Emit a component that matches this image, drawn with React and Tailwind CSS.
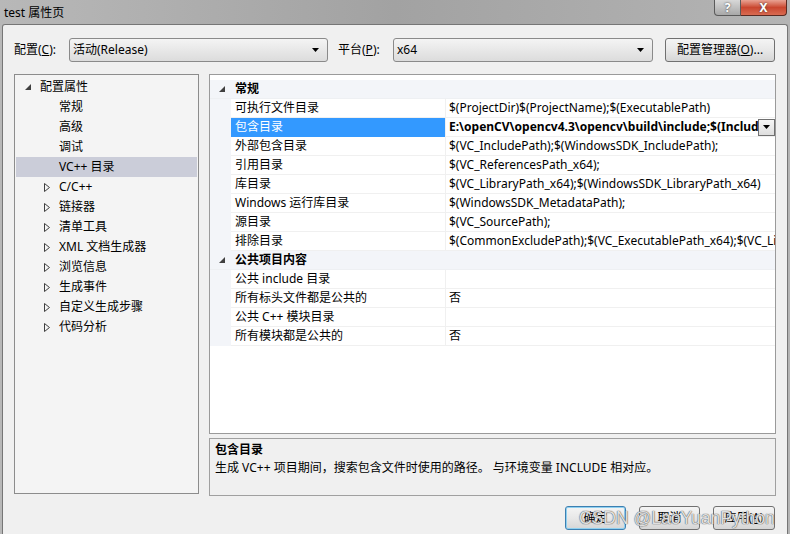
import React from "react";

const font = { fontFamily: '"Noto Sans", "Noto Sans CJK SC", sans-serif' };

const Expanded = ({ className = "" }) => (
  <svg width="6" height="6" viewBox="0 0 6 6" className={className}>
    <path d="M6 0 L6 6 L0 6 Z" fill="#404040" />
  </svg>
);

const Collapsed = () => (
  <svg width="6" height="9" viewBox="0 0 6 9">
    <path d="M0.5 0.5 L5.5 4.5 L0.5 8.5 Z" fill="none" stroke="#404040" strokeWidth="1" />
  </svg>
);

const Arrow = () => (
  <svg width="7" height="4" viewBox="0 0 7 4">
    <path d="M0 0 L7 0 L3.5 4 Z" fill="#000" />
  </svg>
);

const Combo = ({ width, text }) => (
  <div
    className={`${width} h-[24px] flex items-center justify-between pl-[3px] pr-[8px] border border-[#8a8a8a] rounded-[3px] bg-gradient-to-b from-[#f4f4f4] to-[#dcdcdc] text-[12px] text-black`}
  >
    <span>{text}</span>
    <Arrow />
  </div>
);

const Button = ({ className = "", children, focused }) => (
  <div
    className={`h-[24px] flex items-center justify-center rounded-[3px] border text-[12px] text-black bg-gradient-to-b from-[#f4f4f4] via-[#e8e8e8] to-[#d6d6d6] ${
      focused ? "border-[#3c7fb1] shadow-[inset_0_0_0_1px_#8fd0f0]" : "border-[#707070]"
    } ${className}`}
  >
    {children}
  </div>
);

const treeItems = [
  { label: "配置属性", level: 0, icon: "open" },
  { label: "常规", level: 1 },
  { label: "高级", level: 1 },
  { label: "调试", level: 1 },
  { label: "VC++ 目录", level: 1, selected: true },
  { label: "C/C++", level: 1, icon: "closed" },
  { label: "链接器", level: 1, icon: "closed" },
  { label: "清单工具", level: 1, icon: "closed" },
  { label: "XML 文档生成器", level: 1, icon: "closed" },
  { label: "浏览信息", level: 1, icon: "closed" },
  { label: "生成事件", level: 1, icon: "closed" },
  { label: "自定义生成步骤", level: 1, icon: "closed" },
  { label: "代码分析", level: 1, icon: "closed" },
];

const groups = [
  {
    title: "常规",
    rows: [
      ["可执行文件目录", "$(ProjectDir)$(ProjectName);$(ExecutablePath)"],
      ["包含目录", "E:\\openCV\\opencv4.3\\opencv\\build\\include;$(IncludePath)", true],
      ["外部包含目录", "$(VC_IncludePath);$(WindowsSDK_IncludePath);"],
      ["引用目录", "$(VC_ReferencesPath_x64);"],
      ["库目录", "$(VC_LibraryPath_x64);$(WindowsSDK_LibraryPath_x64)"],
      ["Windows 运行库目录", "$(WindowsSDK_MetadataPath);"],
      ["源目录", "$(VC_SourcePath);"],
      ["排除目录", "$(CommonExcludePath);$(VC_ExecutablePath_x64);$(VC_LibraryPath_x64)"],
    ],
  },
  {
    title: "公共项目内容",
    rows: [
      ["公共 include 目录", ""],
      ["所有标头文件都是公共的", "否"],
      ["公共 C++ 模块目录", ""],
      ["所有模块都是公共的", "否"],
    ],
  },
];

function TreeView() {
  return (
    <div className="w-[186px] h-[420px] border border-[#8c8c8c] bg-[#f4f4f4] pt-[2px] px-px">
      {treeItems.map((item) => (
        <div
          key={item.label}
          className={`h-[20px] flex items-center text-[12px] text-black ${
            item.selected ? "bg-[#cbcdd9]" : ""
          }`}
        >
          <div className={`${item.level === 0 ? "w-[24px]" : "w-[43px]"} flex justify-end pr-[9px]`}>
            {item.icon === "open" && <Expanded />}
            {item.icon === "closed" && <Collapsed />}
          </div>
          <span className="whitespace-nowrap">{item.label}</span>
        </div>
      ))}
    </div>
  );
}

function PropertyGrid() {
  return (
    <div className="w-[567px] h-[360px] border border-[#9a9a9a] bg-white pt-[5px] overflow-hidden">
      {groups.map((g) => (
        <div key={g.title}>
          <div className="h-[19px] flex items-center bg-[#f3f5f9] border-b border-[#eef0f3]">
            <div className="w-[21px] flex justify-center pl-[2px]">
              <Expanded />
            </div>
            <span className="text-[12px] font-bold text-black pl-[4px]">{g.title}</span>
          </div>
          {g.rows.map(([name, value, sel]) => (
            <div key={name} className="h-[19px] flex">
              <div className="w-[21px] bg-[#f3f5f9]" />
              <div
                className={`w-[214px] flex items-center pl-[4px] text-[12px] whitespace-nowrap border-b ${
                  sel ? "bg-[#3399ff] text-white border-[#3399ff]" : "text-black border-[#f0f0f0]"
                }`}
              >
                {name}
              </div>
              <div className="w-px bg-[#f0f0f0]" />
              <div className="flex-1 min-w-0 flex items-center border-b border-[#f0f0f0] pl-[3px] text-[12px] text-black">
                <span className={`flex-1 min-w-0 whitespace-nowrap overflow-hidden ${sel ? "font-bold" : ""}`}>
                  {value}
                </span>
                {sel && (
                  <div className="w-[17px] h-[17px] shrink-0 flex items-center justify-center border border-[#707070] bg-gradient-to-b from-[#f6f6f6] to-[#dedede]">
                    <Arrow />
                  </div>
                )}
              </div>
            </div>
          ))}
        </div>
      ))}
    </div>
  );
}

export default function App() {
  return (
    <div
      style={font}
      className="relative w-[790px] h-[534px] overflow-hidden flex flex-col bg-gradient-to-r from-[#b8b8b8] via-[#a2a2a2] to-[#b4b4b4]"
    >
      {/* title bar */}
      <div className="h-[24px] flex items-start justify-between shrink-0">
        <span className="pl-[4px] pt-[4px] text-[12px] text-black">test 属性页</span>
        <div className="flex mr-[3px]">
          <div className="w-[27px] h-[16px] flex items-center justify-center rounded-bl-[4px] border border-t-0 border-[#5a5a5a] bg-gradient-to-b from-[#d8d8d8] to-[#a8a8a8] text-[12px] font-bold text-white [text-shadow:0_0_2px_#333]">
            ?
          </div>
          <div className="w-[46px] h-[16px] flex items-center justify-center rounded-br-[4px] border border-l-0 border-t-0 border-[#5a2a22] bg-gradient-to-b from-[#e8a293] via-[#c9462f] to-[#d96b52] text-[12px] font-bold text-white [text-shadow:0_0_2px_#333]">
            X
          </div>
        </div>
      </div>

      {/* window body */}
      <div className="flex-1 mx-[2px] border border-b-0 border-[#767676] rounded-t-[3px] bg-[#f0f0f0] flex flex-col px-[11px] pt-[13px]">
        <div className="flex items-center h-[24px]">
          <span className="text-[12px] text-black w-[55px] whitespace-nowrap">
            配置(<span className="underline">C</span>):
          </span>
          <Combo width="w-[259px]" text="活动(Release)" />
          <span className="ml-[10px] text-[12px] text-black w-[55px] whitespace-nowrap">
            平台(<span className="underline">P</span>):
          </span>
          <Combo width="w-[260px]" text="x64" />
          <Button className="ml-[12px] w-[110px]">
            配置管理器(<span className="underline">O</span>)...
          </Button>
        </div>

        <div className="flex items-start mt-[12px] gap-[10px]">
          <TreeView />
          <div className="flex flex-col gap-[4px]">
            <PropertyGrid />
            <div className="w-[567px] h-[58px] border border-[#a0a0a0] bg-[#f0f0f0] px-[5px] pt-[2px] text-[12px] text-black leading-[18px]">
              <div className="font-bold">包含目录</div>
              <div>生成 VC++ 项目期间，搜索包含文件时使用的路径。 与环境变量 INCLUDE 相对应。</div>
            </div>
          </div>
        </div>

        <div className="flex justify-end mt-[10px] pr-[1px] gap-[13px]">
          <Button focused className="w-[61px]">确定</Button>
          <Button className="w-[61px]">取消</Button>
          <Button className="w-[62px]">
            应用(<span className="underline">A</span>)
          </Button>
        </div>
      </div>

      {/* watermark */}
      <div
        className="absolute left-[579px] top-[505px] text-[17.5px] text-[#ffffffd0] whitespace-nowrap [text-shadow:0_0_1px_#555,0_0_1px_#555] pointer-events-none"
        style={{ fontFamily: '"Liberation Sans", sans-serif' }}
      >
        CSDN @LaoYuanPython
      </div>
    </div>
  );
}
